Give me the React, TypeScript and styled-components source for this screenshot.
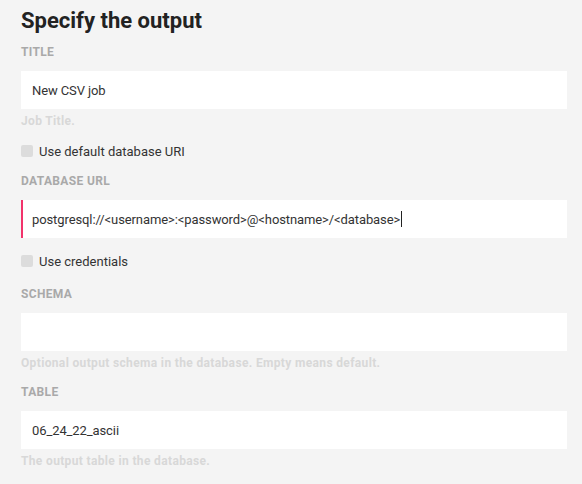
import React from "react";
import styled, { createGlobalStyle } from "styled-components";

const Global = createGlobalStyle`
  html, body { margin: 0; padding: 0; background: #f4f4f4; }
  body { font-family: Roboto, "Liberation Sans", sans-serif; }
`;

const Page = styled.div`
  width: 546px;
  padding: 8px 15px 20px 21px;
  background: #f4f4f4;
`;

const Heading = styled.h2`
  margin: 0;
  font-size: 22px;
  line-height: 26px;
  font-weight: 700;
  color: #222;
`;

const Label = styled.div<{ $top: number }>`
  margin-top: ${(p) => p.$top}px;
  margin-bottom: 12px;
  font-size: 12px;
  line-height: 14px;
  font-weight: 700;
  letter-spacing: 0.35px;
  text-transform: uppercase;
  color: #a9a9a9;
`;

const Input = styled.div<{ $focused?: boolean }>`
  box-sizing: border-box;
  height: 38px;
  background: #fff;
  padding-left: ${(p) => (p.$focused ? 9 : 11)}px;
  border-left: ${(p) => (p.$focused ? "2px solid #f2336b" : "none")};
  display: flex;
  align-items: center;
  font-size: 13px;
  letter-spacing: -0.1px;
  color: #333;
  white-space: nowrap;
`;

const Caret = styled.span`
  display: inline-block;
  width: 1px;
  height: 16px;
  background: #222;
  margin-left: 1px;
`;

const Help = styled.div`
  margin-top: 5px;
  font-size: 12px;
  line-height: 14px;
  font-weight: 700;
  letter-spacing: 0.35px;
  color: #d8d8d8;
`;

const CheckRow = styled.label<{ $top: number }>`
  margin-top: ${(p) => p.$top}px;
  display: flex;
  align-items: center;
  gap: 6px;
  height: 16px;
  font-size: 13px;
  color: #333;
`;

const Box = styled.span`
  width: 12px;
  height: 12px;
  border-radius: 2px;
  background: #dcdcdc;
`;

export default function App() {
  return (
    <>
      <Global />
      <Page>
        <Heading>Specify the output</Heading>
        <Label $top={11}>Title</Label>
        <Input>New CSV job</Input>
        <Help>Job Title.</Help>
        <CheckRow $top={15}>
          <Box />
          Use default database URI
        </CheckRow>
        <Label $top={15}>Database URL</Label>
        <Input $focused>
          {"postgresql://<username>:<password>@<hostname>/<database>"}
          <Caret />
        </Input>
        <CheckRow $top={15}>
          <Box />
          Use credentials
        </CheckRow>
        <Label $top={18}>Schema</Label>
        <Input />
        <Help>Optional output schema in the database. Empty means default.</Help>
        <Label $top={15}>Table</Label>
        <Input>06_24_22_ascii</Input>
        <Help>The output table in the database.</Help>
      </Page>
    </>
  );
}
